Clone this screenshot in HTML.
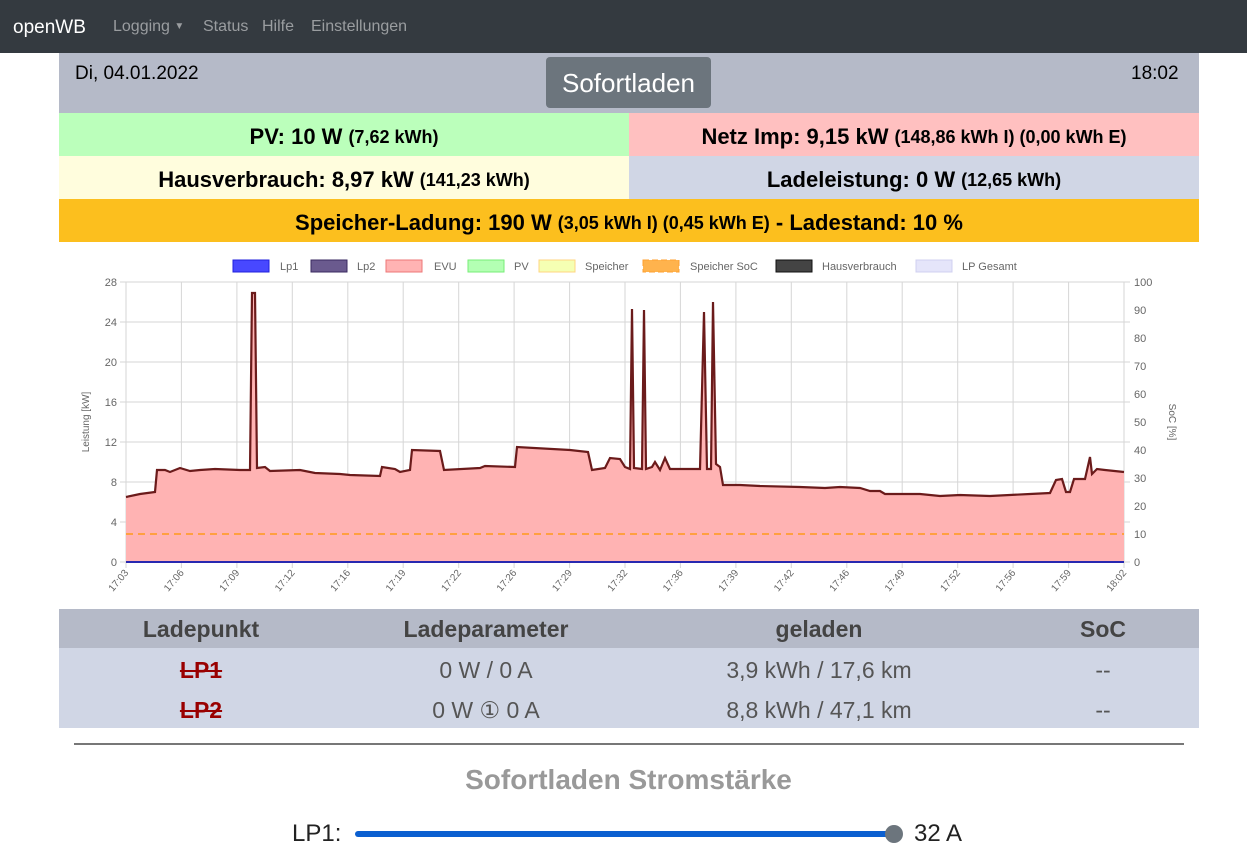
<!DOCTYPE html>
<html><head><meta charset="utf-8"><style>
*{box-sizing:border-box;margin:0;padding:0}
body{width:1247px;height:840px;overflow:hidden;background:#fff;font-family:"Liberation Sans",sans-serif;color:#212529}
.nav{position:absolute;left:0;top:0;width:1247px;height:53px;background:#343a40}
.nav span{position:absolute;top:18px;font-size:16px;color:#9a9da0}
.abs{position:absolute}
.row{position:absolute;height:43px;padding-top:5px;display:flex;align-items:center;justify-content:center;font-weight:bold;font-size:22px;color:#000;white-space:nowrap}
.row small{font-size:18px;margin-left:6px}
</style></head><body>
<div class="nav">
<span style="left:13px;color:#fff;font-size:19px;top:17px">openWB</span>
<span style="left:113px">Logging <span style="position:static;font-size:10px;vertical-align:2px">&#9660;</span></span>
<span style="left:203px">Status</span>
<span style="left:262px">Hilfe</span>
<span style="left:311px">Einstellungen</span>
</div>
<div class="abs" style="left:59px;top:53px;width:1140px;height:60px;background:#b5bac8"></div>
<div class="abs" style="left:75px;top:63px;font-size:19px;color:#000">Di, 04.01.2022</div>
<div class="abs" style="left:1131px;top:63px;font-size:19px;color:#000">18:02</div>
<div class="abs" style="left:546px;top:57px;width:165px;height:51px;background:#6c757d;border-radius:4px;color:#fff;font-size:26px;text-align:center;line-height:53px">Sofortladen</div>
<div class="row" style="left:59px;top:113px;width:570px;background:#bbffbb">PV: 10 W<small>(7,62 kWh)</small></div>
<div class="row" style="left:629px;top:113px;width:570px;background:#ffc0c0">Netz Imp: 9,15 kW<small>(148,86 kWh I) (0,00 kWh E)</small></div>
<div class="row" style="left:59px;top:156px;width:570px;background:#fffddd">Hausverbrauch: 8,97 kW<small>(141,23 kWh)</small></div>
<div class="row" style="left:629px;top:156px;width:570px;background:#d0d6e5">Ladeleistung: 0 W<small>(12,65 kWh)</small></div>
<div class="row" style="left:59px;top:199px;width:1140px;background:#fcbf1e">Speicher-Ladung: 190 W<small>(3,05 kWh I) (0,45 kWh E)</small>&nbsp;- Ladestand: 10 %</div>

<svg class="abs" style="left:0;top:250px" width="1247" height="355" viewBox="0 250 1247 355" font-family="Liberation Sans, sans-serif" font-size="11" fill="#666">
<g font-size="11">
<rect x="233" y="260" width="36" height="12" fill="#4848ff" stroke="#2020dd"/><text x="280" y="270">Lp1</text>
<rect x="311" y="260" width="36" height="12" fill="#6a5a8e" stroke="#3a2a60"/><text x="357" y="270">Lp2</text>
<rect x="386" y="260" width="36" height="12" fill="#ffb3b3" stroke="#ee7777"/><text x="434" y="270">EVU</text>
<rect x="468" y="260" width="36" height="12" fill="#b3ffb3" stroke="#77ee77"/><text x="514" y="270">PV</text>
<rect x="539" y="260" width="36" height="12" fill="#f5ffb3" stroke="#ffd580"/><text x="585" y="270">Speicher</text>
<rect x="643" y="260" width="36" height="12" fill="#ffb34d" stroke="#ffa030" stroke-dasharray="6 3"/><text x="690" y="270">Speicher SoC</text>
<rect x="776" y="260" width="36" height="12" fill="#444" stroke="#111"/><text x="822" y="270">Hausverbrauch</text>
<rect x="916" y="260" width="36" height="12" fill="#e5e5fa" stroke="#d0d0f0"/><text x="962" y="270">LP Gesamt</text>
</g>
<g stroke="#d6d6d6" stroke-width="1">
<line x1="120" y1="282" x2="1130" y2="282"/><line x1="120" y1="322" x2="1130" y2="322"/><line x1="120" y1="362" x2="1130" y2="362"/><line x1="120" y1="402" x2="1130" y2="402"/><line x1="120" y1="442" x2="1130" y2="442"/><line x1="120" y1="482" x2="1130" y2="482"/><line x1="120" y1="522" x2="1130" y2="522"/><line x1="120" y1="562" x2="1130" y2="562"/>
<line x1="126" y1="282" x2="126" y2="568"/><line x1="181.4" y1="282" x2="181.4" y2="568"/><line x1="236.9" y1="282" x2="236.9" y2="568"/><line x1="292.3" y1="282" x2="292.3" y2="568"/><line x1="347.8" y1="282" x2="347.8" y2="568"/><line x1="403.2" y1="282" x2="403.2" y2="568"/><line x1="458.7" y1="282" x2="458.7" y2="568"/><line x1="514.1" y1="282" x2="514.1" y2="568"/><line x1="569.6" y1="282" x2="569.6" y2="568"/><line x1="625" y1="282" x2="625" y2="568"/><line x1="680.4" y1="282" x2="680.4" y2="568"/><line x1="735.9" y1="282" x2="735.9" y2="568"/><line x1="791.3" y1="282" x2="791.3" y2="568"/><line x1="846.8" y1="282" x2="846.8" y2="568"/><line x1="902.2" y1="282" x2="902.2" y2="568"/><line x1="957.7" y1="282" x2="957.7" y2="568"/><line x1="1013.1" y1="282" x2="1013.1" y2="568"/><line x1="1068.6" y1="282" x2="1068.6" y2="568"/><line x1="1124" y1="282" x2="1124" y2="568"/>
</g>
<path d="M126,562 L126,497 140,494 155,492 157,470 165,470 170,472 180,468 190,471 200,470 215,469 240,470 250,470 252,293 255,293 257,468 265,467 270,471 300,470 315,473 340,474 350,475 380,476 382,467 395,469 400,472 410,470 412,450 440,451 444,470 480,468 485,466 515,467 517,447 570,450 588,452 592,470 605,468 610,458 620,459 625,467 630,469 632,309 634,468 642,469 644,310 646,469 652,467 655,462 660,470 665,458 670,469 700,469 704,312 707,469 711,469 713,302 716,464 720,467 723,485 740,485 760,486 800,487 825,488 840,487 860,488 870,491 880,491 885,494 920,494 940,496 960,495 990,496 1030,494 1050,493 1056,480 1062,479 1066,492 1070,492 1074,479 1085,479 1090,457 1092,474 1097,469 1105,470 1124,472 L1124,562 Z" fill="#ffb3b3" stroke="none"/>
<path d="M126,497 140,494 155,492 157,470 165,470 170,472 180,468 190,471 200,470 215,469 240,470 250,470 252,293 255,293 257,468 265,467 270,471 300,470 315,473 340,474 350,475 380,476 382,467 395,469 400,472 410,470 412,450 440,451 444,470 480,468 485,466 515,467 517,447 570,450 588,452 592,470 605,468 610,458 620,459 625,467 630,469 632,309 634,468 642,469 644,310 646,469 652,467 655,462 660,470 665,458 670,469 700,469 704,312 707,469 711,469 713,302 716,464 720,467 723,485 740,485 760,486 800,487 825,488 840,487 860,488 870,491 880,491 885,494 920,494 940,496 960,495 990,496 1030,494 1050,493 1056,480 1062,479 1066,492 1070,492 1074,479 1085,479 1090,457 1092,474 1097,469 1105,470 1124,472" fill="none" stroke="#6b1b1b" stroke-width="2.2"/>
<line x1="126" y1="534" x2="1124" y2="534" stroke="#ffa040" stroke-width="2" stroke-dasharray="7 5"/>
<line x1="126" y1="562" x2="1124" y2="562" stroke="#2828b0" stroke-width="2"/>
<g text-anchor="end"><text x="117" y="286">28</text><text x="117" y="326">24</text><text x="117" y="366">20</text><text x="117" y="406">16</text><text x="117" y="446">12</text><text x="117" y="486">8</text><text x="117" y="526">4</text><text x="117" y="566">0</text></g>
<g><text x="1134" y="286">100</text><text x="1134" y="314">90</text><text x="1134" y="342">80</text><text x="1134" y="370">70</text><text x="1134" y="398">60</text><text x="1134" y="426">50</text><text x="1134" y="454">40</text><text x="1134" y="482">30</text><text x="1134" y="510">20</text><text x="1134" y="538">10</text><text x="1134" y="566">0</text></g>
<text transform="translate(89,422) rotate(-90)" text-anchor="middle" font-size="10">Leistung [kW]</text>
<text transform="translate(1169,422) rotate(90)" text-anchor="middle" font-size="10">SoC [%]</text>
<g text-anchor="end" font-size="10">
<text transform="translate(129,573) rotate(-50)">17:03</text><text transform="translate(184.4,573) rotate(-50)">17:06</text><text transform="translate(239.9,573) rotate(-50)">17:09</text><text transform="translate(295.3,573) rotate(-50)">17:12</text><text transform="translate(350.8,573) rotate(-50)">17:16</text><text transform="translate(406.2,573) rotate(-50)">17:19</text><text transform="translate(461.7,573) rotate(-50)">17:22</text><text transform="translate(517.1,573) rotate(-50)">17:26</text><text transform="translate(572.6,573) rotate(-50)">17:29</text><text transform="translate(628,573) rotate(-50)">17:32</text><text transform="translate(683.4,573) rotate(-50)">17:36</text><text transform="translate(738.9,573) rotate(-50)">17:39</text><text transform="translate(794.3,573) rotate(-50)">17:42</text><text transform="translate(849.8,573) rotate(-50)">17:46</text><text transform="translate(905.2,573) rotate(-50)">17:49</text><text transform="translate(960.7,573) rotate(-50)">17:52</text><text transform="translate(1016.1,573) rotate(-50)">17:56</text><text transform="translate(1071.6,573) rotate(-50)">17:59</text><text transform="translate(1127,573) rotate(-50)">18:02</text>
</g>
</svg>

<div class="abs" style="left:59px;top:609px;width:1140px;height:39px;background:#b5bac8"></div>
<div class="abs" style="left:59px;top:648px;width:1140px;height:80px;background:#d0d6e5"></div>
<div class="abs" style="left:59px;top:616px;width:1140px;font-size:23px;font-weight:bold;color:#444">
<span class="abs" style="left:142px;transform:translateX(-50%)">Ladepunkt</span>
<span class="abs" style="left:427px;transform:translateX(-50%)">Ladeparameter</span>
<span class="abs" style="left:760px;transform:translateX(-50%)">geladen</span>
<span class="abs" style="left:1044px;transform:translateX(-50%)">SoC</span>
</div>
<div class="abs" style="left:59px;top:657px;width:1140px;font-size:23px;color:#555">
<span class="abs" style="left:142px;transform:translateX(-50%);color:#990000;font-weight:bold;text-decoration:line-through">LP1</span>
<span class="abs" style="left:427px;transform:translateX(-50%)">0 W / 0 A</span>
<span class="abs" style="left:760px;transform:translateX(-50%);white-space:nowrap">3,9 kWh / 17,6 km</span>
<span class="abs" style="left:1044px;transform:translateX(-50%)">--</span>
</div>
<div class="abs" style="left:59px;top:697px;width:1140px;font-size:23px;color:#555">
<span class="abs" style="left:142px;transform:translateX(-50%);color:#990000;font-weight:bold;text-decoration:line-through">LP2</span>
<span class="abs" style="left:427px;transform:translateX(-50%);white-space:nowrap">0 W &#9312; 0 A</span>
<span class="abs" style="left:760px;transform:translateX(-50%);white-space:nowrap">8,8 kWh / 47,1 km</span>
<span class="abs" style="left:1044px;transform:translateX(-50%)">--</span>
</div>
<div class="abs" style="left:74px;top:743px;width:1110px;height:2px;background:#777"></div>
<div class="abs" style="left:0;top:764px;width:1257px;text-align:center;font-size:28px;font-weight:bold;color:#999">Sofortladen Stromstärke</div>
<div class="abs" style="left:292px;top:820px;font-size:24px;color:#222">LP1:</div>
<div class="abs" style="left:355px;top:831px;width:540px;height:6px;background:#0b5fd0;border-radius:3px"></div>
<div class="abs" style="left:885px;top:825px;width:18px;height:18px;background:#6c757d;border-radius:50%"></div>
<div class="abs" style="left:914px;top:820px;font-size:24px;color:#222">32 A</div>
</body></html>
